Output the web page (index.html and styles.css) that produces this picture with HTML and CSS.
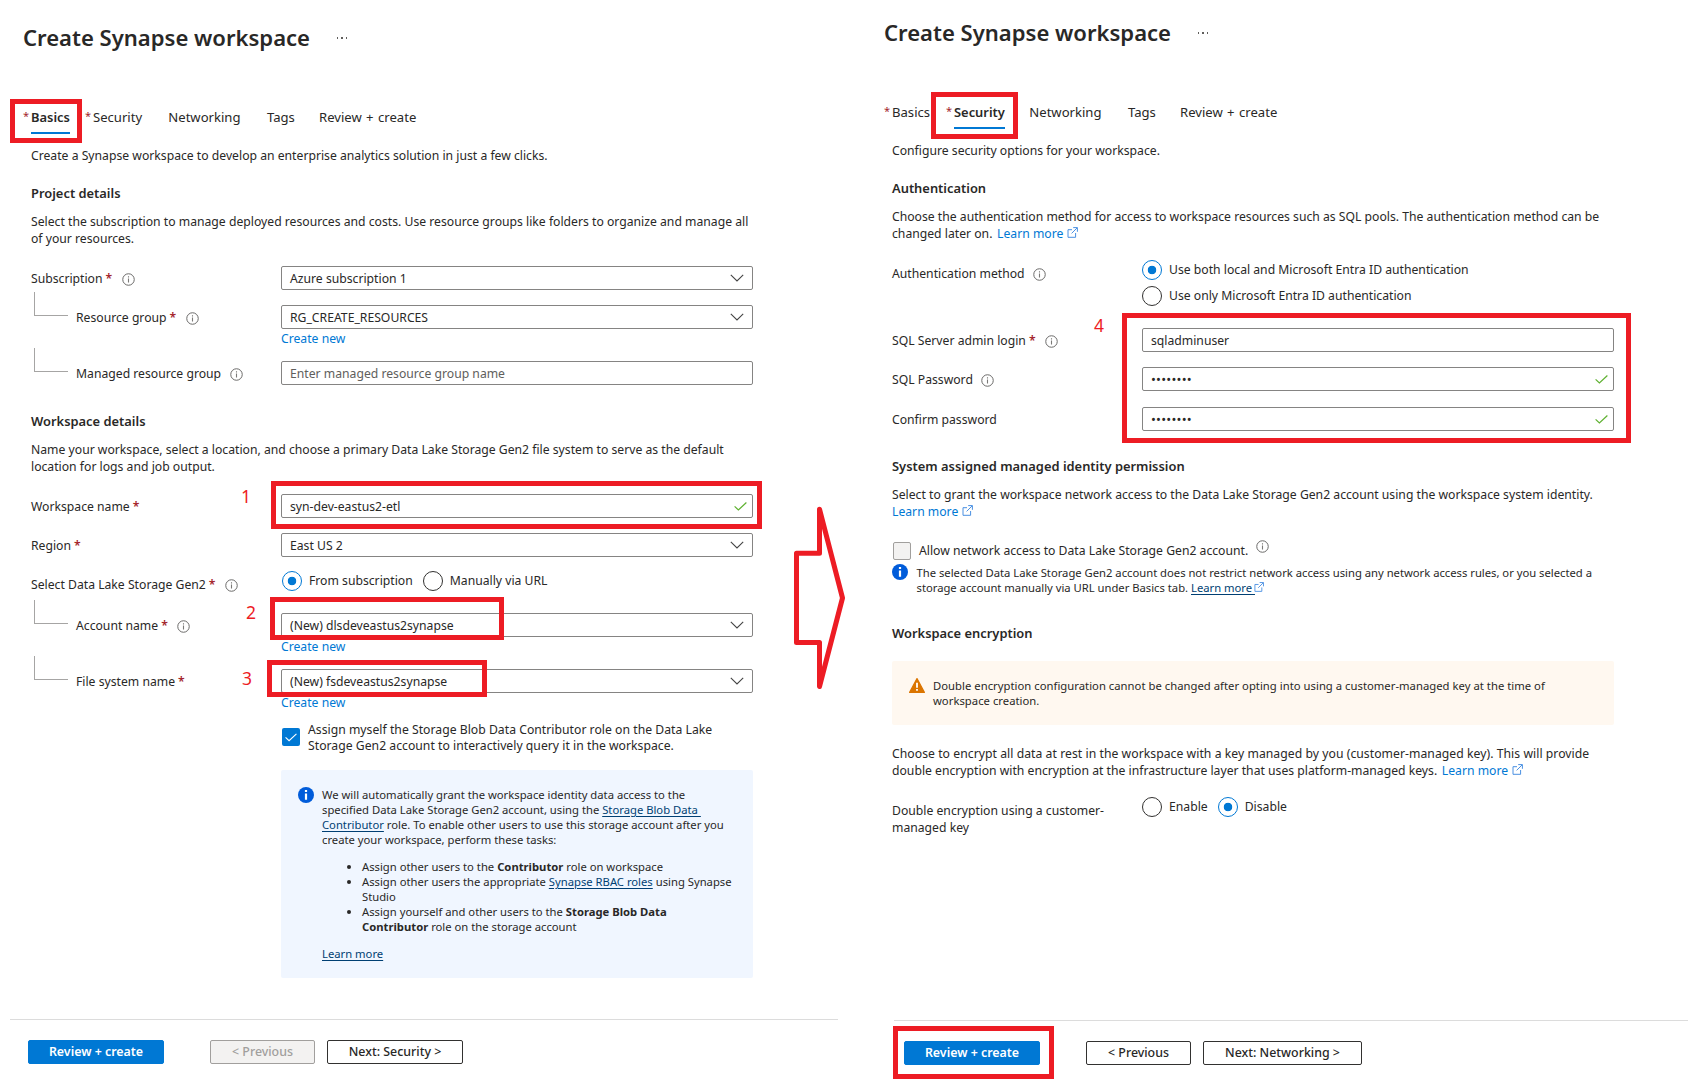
FILE: index.html
```html
<!DOCTYPE html>
<html lang="en">
<head>
<meta charset="utf-8">
<title>Create Synapse workspace</title>
<link rel="stylesheet" href="styles.css">
</head>
<body>
<svg class="sprite" aria-hidden="true">
  <symbol id="info" viewBox="0 0 13 13"><circle cx="6.5" cy="6.5" r="5.75" fill="none" stroke="#6b6a69" stroke-width="1"/><path d="M6.5 5.5v4M6.5 3.2v1.2" stroke="#7a7977" stroke-width="1.1"/></symbol>
  <symbol id="chevron" viewBox="0 0 14 8"><path d="M.8.8 7 7 13.2.8" fill="none" stroke="#444" stroke-width="1.1"/></symbol>
  <symbol id="check" viewBox="0 0 13 9"><path d="M.6 4.4 4.4 8 12.4.5" fill="none" stroke="currentColor" stroke-width="1.2"/></symbol>
  <symbol id="info-fill" viewBox="0 0 16 16"><circle cx="8" cy="8" r="8" fill="#015cda"/><path d="M6.9 6.5h2.2v6.3H6.9zM6.9 3.1h2.2v2H6.9z" fill="#fff"/></symbol>
  <symbol id="external" viewBox="0 0 11 11"><path d="M5 2.7H1v7.6h7.6V6M6.2.6h4.2v4.2M10.2.8 4.6 6.4" fill="none" stroke="#4a90e2" stroke-width="1"/></symbol>
  <symbol id="warning" viewBox="0 0 16 15"><path d="M8 .6 15.4 14.4H.6z" fill="#db7500" stroke="#db7500" stroke-width="1.2" stroke-linejoin="round"/><path d="M8 4.8v5M8 11v1.8" stroke="#fff" stroke-width="1.8"/></symbol>
</svg>

<main class="page">
  <section class="panel panel-basics">
    <header class="title"><h1>Create Synapse workspace</h1><span class="dots"><i></i><i></i><i></i></span></header>
    <nav class="tabs">
      <a class="tab required active">Basics</a><a class="tab required">Security</a><a class="tab">Networking</a><a class="tab">Tags</a><a class="tab">Review + create</a>
    </nav>
    <p class="intro">Create a Synapse workspace to develop an enterprise analytics solution in just a few clicks.</p>

    <h2>Project details</h2>
    <p class="text">Select the subscription to manage deployed resources and costs. Use resource groups like folders to organize and manage all<br>of your resources.</p>

    <div class="row first">
      <div class="label">Subscription<b>*</b><svg class="info"><use href="#info"/></svg></div>
      <div class="box"><span>Azure subscription 1</span><svg class="chevron"><use href="#chevron"/></svg></div>
    </div>
    <div class="row">
      <div class="label child">Resource group<b>*</b><svg class="info"><use href="#info"/></svg></div>
      <div class="field"><div class="box"><span>RG_CREATE_RESOURCES</span><svg class="chevron"><use href="#chevron"/></svg></div><a class="link new">Create new</a></div>
    </div>
    <div class="row after-new">
      <div class="label child">Managed resource group<svg class="info"><use href="#info"/></svg></div>
      <div class="box placeholder"><span>Enter managed resource group name</span></div>
    </div>

    <h2 class="workspace">Workspace details</h2>
    <p class="text">Name your workspace, select a location, and choose a primary Data Lake Storage Gen2 file system to serve as the default<br>location for logs and job output.</p>

    <div class="row first">
      <div class="label">Workspace name<b>*</b></div>
      <div class="box"><span>syn-dev-eastus2-etl</span><svg class="check"><use href="#check"/></svg></div>
    </div>
    <div class="row">
      <div class="label">Region<b>*</b></div>
      <div class="box"><span>East US 2</span><svg class="chevron"><use href="#chevron"/></svg></div>
    </div>
    <div class="row storage">
      <div class="label">Select Data Lake Storage Gen2<b>*</b><svg class="info"><use href="#info"/></svg></div>
      <div class="radios"><span class="radio on">From subscription</span><span class="radio">Manually via URL</span></div>
    </div>
    <div class="row">
      <div class="label child">Account name<b>*</b><svg class="info"><use href="#info"/></svg></div>
      <div class="field"><div class="box"><span>(New) dlsdeveastus2synapse</span><svg class="chevron"><use href="#chevron"/></svg></div><a class="link new">Create new</a></div>
    </div>
    <div class="row after-new">
      <div class="label child">File system name<b>*</b></div>
      <div class="field"><div class="box"><span>(New) fsdeveastus2synapse</span><svg class="chevron"><use href="#chevron"/></svg></div><a class="link new">Create new</a></div>
    </div>

    <div class="assign">
      <span class="checkbox checked"><svg><use href="#check"/></svg></span>
      <p>Assign myself the Storage Blob Data Contributor role on the Data Lake<br>Storage Gen2 account to interactively query it in the workspace.</p>
    </div>

    <div class="banner">
      <svg class="status"><use href="#info-fill"/></svg>
      <div>
        <p>We will automatically grant the workspace identity data access to the<br>specified Data Lake Storage Gen2 account, using the <a>Storage Blob Data&nbsp;<br>Contributor</a> role. To enable other users to use this storage account after you<br>create your workspace, perform these tasks:</p>
        <ul>
          <li>Assign other users to the <strong>Contributor</strong> role on workspace</li>
          <li>Assign other users the appropriate <a>Synapse RBAC roles</a> using Synapse<br>Studio</li>
          <li>Assign yourself and other users to the <strong>Storage Blob Data<br>Contributor</strong> role on the storage account</li>
        </ul>
        <p><a>Learn more</a></p>
      </div>
    </div>

    <footer class="footer">
      <button class="btn primary">Review + create</button><button class="btn prev" disabled>&lt; Previous</button><button class="btn next">Next: Security &gt;</button>
    </footer>
  </section>

  <section class="panel panel-security">
    <header class="title"><h1>Create Synapse workspace</h1><span class="dots"><i></i><i></i><i></i></span></header>
    <nav class="tabs">
      <a class="tab required">Basics</a><a class="tab required active">Security</a><a class="tab">Networking</a><a class="tab">Tags</a><a class="tab">Review + create</a>
    </nav>
    <p class="intro">Configure security options for your workspace.</p>

    <h2>Authentication</h2>
    <p class="text">Choose the authentication method for access to workspace resources such as SQL pools. The authentication method can be<br>changed later on. <a class="link more">Learn more<svg><use href="#external"/></svg></a></p>

    <div class="row first">
      <div class="label">Authentication method<svg class="info"><use href="#info"/></svg></div>
      <div class="radios stacked"><span class="radio on">Use both local and Microsoft Entra ID authentication</span><span class="radio">Use only Microsoft Entra ID authentication</span></div>
    </div>
    <div class="row login">
      <div class="label">SQL Server admin login<b>*</b><svg class="info"><use href="#info"/></svg></div>
      <div class="box"><span>sqladminuser</span></div>
    </div>
    <div class="row">
      <div class="label">SQL Password<svg class="info"><use href="#info"/></svg></div>
      <div class="box"><span class="secret">••••••••</span><svg class="check"><use href="#check"/></svg></div>
    </div>
    <div class="row confirm">
      <div class="label">Confirm password</div>
      <div class="box"><span class="secret">••••••••</span><svg class="check"><use href="#check"/></svg></div>
    </div>

    <h2 class="identity">System assigned managed identity permission</h2>
    <p class="text">Select to grant the workspace network access to the Data Lake Storage Gen2 account using the workspace system identity.<br><a class="link more flush">Learn more<svg><use href="#external"/></svg></a></p>
    <div class="allow"><span class="checkbox disabled"></span>Allow network access to Data Lake Storage Gen2 account.<svg class="info"><use href="#info"/></svg></div>
    <div class="note">
      <svg class="status"><use href="#info-fill"/></svg>
      <p>The selected Data Lake Storage Gen2 account does not restrict network access using any network access rules, or you selected a<br>storage account manually via URL under Basics tab. <a>Learn more&nbsp;</a><svg class="ext"><use href="#external"/></svg></p>
    </div>

    <h2 class="encryption">Workspace encryption</h2>
    <div class="banner warn">
      <svg class="status"><use href="#warning"/></svg>
      <p>Double encryption configuration cannot be changed after opting into using a customer-managed key at the time of<br>workspace creation.</p>
    </div>
    <p class="text customer-key"><span class="lead">Choose to encrypt all data at rest in the workspace with a key managed by you (customer-managed key). This will provide</span><br>double encryption with encryption at the infrastructure layer that uses platform-managed keys. <a class="link more">Learn more<svg><use href="#external"/></svg></a></p>
    <div class="row first">
      <div class="label">Double encryption using a customer-<br>managed key</div>
      <div class="radios"><span class="radio">Enable</span><span class="radio on">Disable</span></div>
    </div>

    <footer class="footer">
      <button class="btn primary">Review + create</button><button class="btn prev">&lt; Previous</button><button class="btn next">Next: Networking &gt;</button>
    </footer>
  </section>

  <div class="mark mark-basics"></div>
  <div class="mark mark-security"></div>
  <div class="mark mark-workspace"></div>
  <div class="mark mark-account"></div>
  <div class="mark mark-filesystem"></div>
  <div class="mark mark-sql"></div>
  <div class="mark mark-review"></div>
  <span class="step step-1">1</span>
  <span class="step step-2">2</span>
  <span class="step step-3">3</span>
  <span class="step step-4">4</span>
  <svg class="arrow" viewBox="0 0 54 190"><path d="M5.500 51.200H28.500V7.200L51.500 96 28.500 184.500V140.500H5.500z" fill="none" stroke="#ed1c24" stroke-width="5" stroke-linejoin="round"/></svg>
</main>
</body>
</html>
```
FILE: styles.css
```css
* { box-sizing: border-box; }

body {
  margin: 0;
  background: #fff;
  color: #292827;
  font: 12.2px/17px "Noto Sans", sans-serif;
  white-space: nowrap;
}

h1, h2, p, ul { margin: 0; }
svg { display: block; flex: none; }
.sprite { position: absolute; width: 0; height: 0; }

.page {
  position: relative;
  display: flex;
  width: 1688px;
  height: 1088px;
  overflow: hidden;
}

.panel { display: flex; flex-direction: column; padding-left: 31px; }
.panel-basics { width: 861px; padding-top: 22px; }
.panel-security { width: 827px; padding-top: 17px; }

/* Title and tabs */
.title { display: flex; align-items: center; height: 30px; margin-left: -8px; }
.title h1 { font-size: 22.05px; font-weight: 600; line-height: 30px; }
.dots { display: flex; gap: 3px; margin: 2px 0 0 26.500px; }
.dots i { width: 1.5px; height: 1.5px; background: #605e5c; }

.tabs {
  display: grid;
  grid-template-columns: 62px 75.3px 98.7px 52px auto;
  justify-items: start;
  margin-top: 56px;
  font-size: 13.1px;
  line-height: 18px;
  word-spacing: 1px;
}
.tab { position: relative; height: 26px; }
.tab.active { font-weight: 600; font-size: 12.9px; border-bottom: 2px solid #0078d4; }
.tab.required::before {
  content: "*";
  position: absolute;
  left: -8px;
  top: -1px;
  color: #a4262c;
  font-size: 11px;
  font-weight: 400;
}

.intro { margin-top: 13px; }
h2 { margin-top: 21px; font-size: 12.9px; font-weight: 600; line-height: 17px; }
h2.workspace { margin-top: 28px; }
h2.identity { margin-top: 27px; }
h2.encryption { margin-top: 30px; }
.text { margin-top: 11px; }

.link { color: #0078d4; }
.more { display: inline-flex; gap: 3.500px; margin-left: 1.500px; }
.more.flush { margin-left: 0; }
.more svg { width: 11px; height: 11px; margin-top: 2px; }

/* Form rows */
.row {
  display: grid;
  grid-template-columns: 250px 472px;
  align-items: start;
  height: 24px;
  margin-top: 15px;
}
.row.first { margin-top: 19px; }
.row.after-new { margin-top: 32px; }
.row.storage { height: 26px; }
.row.login { margin-top: 43px; }
.row.confirm { margin-top: 16px; }

.label { position: relative; display: flex; align-items: flex-start; padding-top: 4px; }
.label b { width: 6px; margin-left: 3px; color: #a4262c; font-size: 12.2px; font-weight: 600; }
.label .info { margin: 3px 0 0 8.500px; }
.label b + .info { margin-left: 10px; }
.info { width: 13px; height: 13px; }

.label.child { padding-left: 45px; }
.label.child::before {
  content: "";
  position: absolute;
  left: 3px;
  top: -13px;
  width: 33px;
  height: 23px;
  border: solid #a6a5a4;
  border-width: 0 0 1px 1px;
}

.box {
  display: flex;
  align-items: center;
  justify-content: space-between;
  height: 24px;
  padding: 0 8px;
  border: 1px solid #858483;
  border-radius: 2px;
  line-height: 18px;
}
.box span { padding-top: 1px; }
.box.placeholder { color: #605e5c; }
.box .chevron { width: 14px; height: 8px; }
.box .check { width: 13px; height: 9px; margin-right: -3px; color: #5fb131; }
.box .secret { padding-top: 0; font-size: 13px; letter-spacing: .22px; }
.new { display: block; margin-top: 1px; }

.radios { display: flex; gap: 10px; padding-left: 1px; }
.panel-security .radios { padding-left: 0; }
.radios.stacked { flex-direction: column; gap: 8px; }
.radio { display: flex; align-items: center; gap: 7px; height: 18px; line-height: 18px; }
.radio::before {
  content: "";
  width: 18px;
  height: 18px;
  border: 1px solid #323130;
  border-radius: 50%;
}
.radio.on::before {
  border-color: #0078d4;
  background: radial-gradient(circle, #0078d4 4px, transparent 4.6px);
}

.checkbox { display: grid; place-items: center; width: 18px; height: 18px; border-radius: 2px; }
.checkbox.checked { background: #0078d4; color: #fff; }
.checkbox.checked svg { width: 12px; height: 9px; }
.checkbox.disabled { border: 1px solid #a19f9d; background: #f3f2f1; }

.assign { display: flex; gap: 8px; margin: 29px 0 0 251px; line-height: 16px; letter-spacing: .02px; }
.assign .checkbox { margin-top: 6px; }

/* Messages */
.banner {
  display: flex;
  gap: 8px;
  width: 472px;
  height: 208px;
  margin: 16px 0 0 250px;
  padding: 17px;
  border-radius: 2px;
  background: #f0f6ff;
  font-size: 11.25px;
  line-height: 15px;
}
.status { width: 16px; height: 16px; }
.banner ul { margin: 12px 0; padding-left: 40px; }
.banner a, .note a { color: #003f73; text-decoration: underline; text-underline-offset: 2px; }
.banner strong { font-weight: 700; }
.banner.warn { width: 722px; height: 64px; margin: 19px 0 0; background: #fff8f0; letter-spacing: .03px; }
.banner.warn .status { height: 15px; }

.allow { display: flex; gap: 8px; height: 18px; margin-top: 22px; padding-left: 1px; line-height: 18px; }
.allow .info { margin: -2px 0 0 0; }
.note { display: flex; gap: 8.500px; margin-top: 4px; font-size: 11.25px; line-height: 15px; letter-spacing: -.01px; }
.note p { margin-top: 1px; }
.note .ext { display: inline-block; width: 10px; height: 10px; margin-left: -1px; vertical-align: 0; }
.customer-key { margin-top: 20px; }
.lead { letter-spacing: .045px; }

/* Footer */
.footer {
  display: flex;
  align-items: flex-start;
  width: 828px;
  height: 69px;
  margin: auto 0 0 -21px;
  padding: 20px 0 0 18px;
  border-top: 1px solid #dcdcdc;
}
.panel-security .footer { width: 794px; height: 68px; margin-left: 2px; padding-left: 10px; }
.btn {
  height: 24px;
  padding: 0;
  border: 1px solid #323130;
  border-radius: 2px;
  background: #fff;
  color: #292827;
  font: 500 12.4px/20px "Noto Sans", sans-serif;
}
.btn.primary { width: 136px; border-color: #0078d4; background: #0078d4; color: #fff; font-weight: 600; }
.btn.prev { width: 105px; margin: 0 12px 0 46px; }
.btn.prev:disabled { border-color: #a19f9d; background: #f3f2f1; color: #a19f9d; }
.btn.next { width: 136px; }
.panel-security .btn.next { width: 159px; }

/* Red call-outs drawn over the form */
.mark { position: absolute; border: 5px solid #ed1c24; }
.mark-basics { left: 10px; top: 99px; width: 72px; height: 44px; }
.mark-security { left: 931px; top: 92px; width: 87px; height: 47px; }
.mark-workspace { left: 271px; top: 481px; width: 491px; height: 48px; }
.mark-account { left: 270px; top: 597px; width: 234px; height: 43px; }
.mark-filesystem { left: 267px; top: 660px; width: 220px; height: 37px; }
.mark-sql { left: 1122px; top: 313px; width: 509px; height: 130px; }
.mark-review { left: 893px; top: 1026px; width: 161px; height: 53px; }

.step { position: absolute; color: #ed1c24; font-size: 17.5px; line-height: 20px; }
.step-1 { left: 241px; top: 486px; }
.step-2 { left: 246px; top: 602px; }
.step-3 { left: 242px; top: 668px; }
.step-4 { left: 1094px; top: 315px; }

.arrow { position: absolute; left: 791px; top: 502px; width: 54px; height: 190px; }
```
